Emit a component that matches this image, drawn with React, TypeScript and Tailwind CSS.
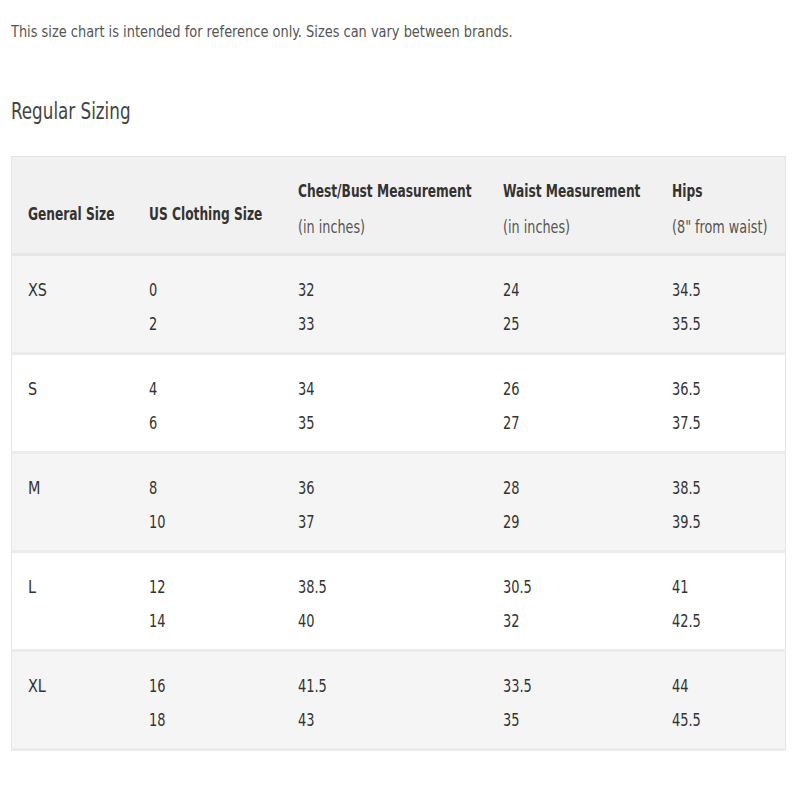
import React from "react";

type Row = { size: string; us: string[]; chest: string[]; waist: string[]; hips: string[] };

const rows: Row[] = [
  { size: "XS", us: ["0", "2"], chest: ["32", "33"], waist: ["24", "25"], hips: ["34.5", "35.5"] },
  { size: "S", us: ["4", "6"], chest: ["34", "35"], waist: ["26", "27"], hips: ["36.5", "37.5"] },
  { size: "M", us: ["8", "10"], chest: ["36", "37"], waist: ["28", "29"], hips: ["38.5", "39.5"] },
  { size: "L", us: ["12", "14"], chest: ["38.5", "40"], waist: ["30.5", "32"], hips: ["41", "42.5"] },
  { size: "XL", us: ["16", "18"], chest: ["41.5", "43"], waist: ["33.5", "35"], hips: ["44", "45.5"] },
];

// the page uses a narrow face; DejaVu Condensed squeezed a bit more stands in for it
const digits = "origin-left [transform:scaleX(0.8)] whitespace-nowrap";
const letters = "origin-left [transform:scaleX(0.89)] whitespace-nowrap";
const bold = "origin-left [transform:scaleX(0.755)] whitespace-nowrap font-bold";
const sub = "origin-left [transform:scaleX(0.79)] whitespace-nowrap font-normal text-[#555]";

function Cell({ lines, first }: { lines: string[]; first?: boolean }) {
  return (
    <td className={`align-top pt-[17px] pb-[11px] ${first ? "pl-4" : ""}`}>
      {lines.map((l, i) => (
        <div key={i} className={`leading-[34px] ${first ? letters : digits}`}>
          {l}
        </div>
      ))}
    </td>
  );
}

function Head({ title, note }: { title: string; note?: string }) {
  return (
    <th className="align-middle text-left pt-2">
      <div className={`leading-[36px] ${bold}`}>{title}</div>
      {note && <div className={`leading-[36px] ${sub}`}>{note}</div>}
    </th>
  );
}

export default function App() {
  return (
    <div className="w-[800px] h-[800px] overflow-hidden bg-white text-[#444] font-['DejaVu_Sans_Condensed','DejaVu_Sans',sans-serif]">
      <div className="pl-[11px] pt-[22px]">
        <p className="text-[16px] leading-[20px] text-[#555] origin-left [transform:scaleX(0.9)] whitespace-nowrap">
          This size chart is intended for reference only. Sizes can vary between brands.
        </p>
      </div>
      <div className="pl-[11px] mt-[54px]">
        <h2 className="text-[23px] leading-[30px] text-[#444] origin-left [transform:scaleX(0.81)] whitespace-nowrap">
          Regular Sizing
        </h2>
      </div>

      <table className="ml-[11px] mt-[30px] w-[775px] table-fixed border-collapse border border-[#e4e4e4] text-[18px] text-[#333]">
        <colgroup>
          <col className="w-[137px]" />
          <col className="w-[149px]" />
          <col className="w-[205px]" />
          <col className="w-[169px]" />
          <col />
        </colgroup>
        <thead>
          <tr className="h-[98px] bg-[#f1f1f1] border-b-[3px] border-[#e6e6e6]">
            <th className="pl-4 pt-4 text-left align-middle">
              <div className={bold}>General Size</div>
            </th>
            <th className="pt-4 text-left align-middle">
              <div className={bold}>US Clothing Size</div>
            </th>
            <Head title="Chest/Bust Measurement" note="(in inches)" />
            <Head title="Waist Measurement" note="(in inches)" />
            <Head title="Hips" note={'(8" from waist)'} />
          </tr>
        </thead>
        <tbody>
          {rows.map((r, i) => (
            <tr
              key={r.size}
              className={`border-b-[3px] border-[#ebebeb] ${i % 2 === 0 ? "bg-[#f5f5f5]" : "bg-white"}`}
            >
              <Cell lines={[r.size]} first />
              <Cell lines={r.us} />
              <Cell lines={r.chest} />
              <Cell lines={r.waist} />
              <Cell lines={r.hips} />
            </tr>
          ))}
        </tbody>
      </table>

      <div className="pl-[11px] mt-[44px]">
        <h2 className="text-[23px] leading-[30px] text-[#444] origin-left [transform:scaleX(0.81)] whitespace-nowrap">
          Junior Sizing
        </h2>
      </div>
    </div>
  );
}
